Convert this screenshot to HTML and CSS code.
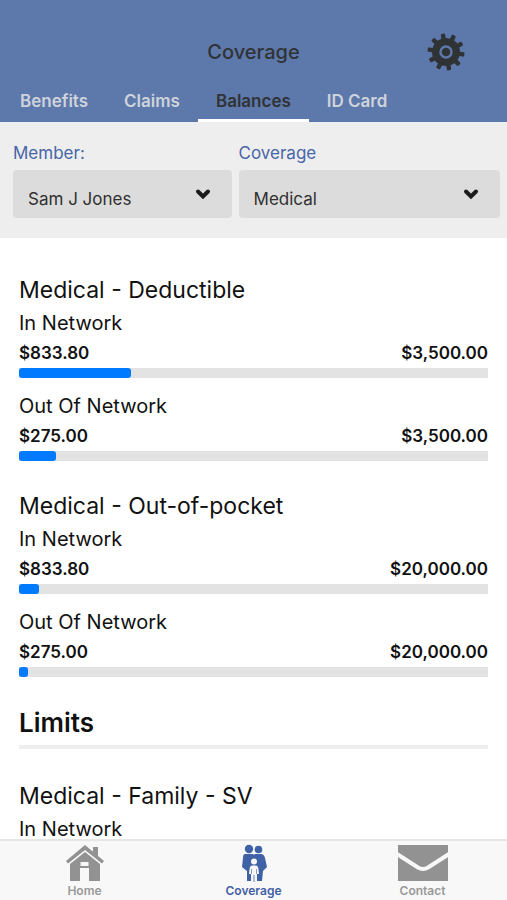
FILE: index.html
```html
<!DOCTYPE html>
<html lang="en">
<head>
<meta charset="utf-8">
<meta name="viewport" content="width=device-width, initial-scale=1">
<title>Coverage</title>
<link rel="stylesheet" href="styles.css">
</head>
<body>
<header class="header">
  <div class="title-bar">
    <h1 class="title">Coverage</h1>
    <button class="settings" type="button" aria-label="Settings">
      <svg viewBox="-20 -20 40 40" width="40" height="40" aria-hidden="true">
        <g transform="rotate(-10)" fill="#303336">
          <circle r="14"/>
          <rect x="-2.200" y="-18.500" width="4.400" height="37" rx="1"/>
          <rect x="-2.200" y="-18.500" width="4.400" height="37" rx="1" transform="rotate(36)"/>
          <rect x="-2.200" y="-18.500" width="4.400" height="37" rx="1" transform="rotate(72)"/>
          <rect x="-2.200" y="-18.500" width="4.400" height="37" rx="1" transform="rotate(108)"/>
          <rect x="-2.200" y="-18.500" width="4.400" height="37" rx="1" transform="rotate(144)"/>
        </g>
        <circle r="5.500" fill="#303336" stroke="#5d78aa" stroke-width="2.400"/>
      </svg>
    </button>
  </div>
  <nav class="tabs" aria-label="Coverage sections">
    <a class="tab" href="#benefits">Benefits</a>
    <a class="tab" href="#claims">Claims</a>
    <a class="tab tab-active" href="#balances" aria-current="page">Balances</a>
    <a class="tab" href="#id-card">ID Card</a>
  </nav>
</header>

<form class="filters">
  <div class="field field-member">
    <label for="member">Member:</label>
    <div class="select-box">
      <select id="member"><option>Sam J Jones</option></select>
      <svg class="chevron" viewBox="0 0 16 12" width="16" height="12" aria-hidden="true"><path d="M3 3.500 8 8.500 13 3.500"/></svg>
    </div>
  </div>
  <div class="field field-coverage">
    <label for="coverage">Coverage</label>
    <div class="select-box">
      <select id="coverage"><option>Medical</option></select>
      <svg class="chevron" viewBox="0 0 16 12" width="16" height="12" aria-hidden="true"><path d="M3 3.500 8 8.500 13 3.500"/></svg>
    </div>
  </div>
</form>

<main class="content">
  <section class="plan">
    <h2 class="plan-title">Medical - Deductible</h2>
    <div class="balance">
      <h3 class="network">In Network</h3>
      <div class="amounts"><span>$833.80</span><span>$3,500.00</span></div>
      <div class="bar"><div class="fill" style="width:23.8%"></div></div>
    </div>
    <div class="balance">
      <h3 class="network">Out Of Network</h3>
      <div class="amounts"><span>$275.00</span><span>$3,500.00</span></div>
      <div class="bar"><div class="fill" style="width:7.9%"></div></div>
    </div>
  </section>
  <section class="plan">
    <h2 class="plan-title">Medical - Out-of-pocket</h2>
    <div class="balance">
      <h3 class="network">In Network</h3>
      <div class="amounts"><span>$833.80</span><span>$20,000.00</span></div>
      <div class="bar"><div class="fill" style="width:4.2%"></div></div>
    </div>
    <div class="balance">
      <h3 class="network">Out Of Network</h3>
      <div class="amounts"><span>$275.00</span><span>$20,000.00</span></div>
      <div class="bar"><div class="fill" style="width:2%"></div></div>
    </div>
  </section>
  <h2 class="limits">Limits</h2>
  <section class="plan">
    <h2 class="plan-title">Medical - Family - SV</h2>
    <div class="balance">
      <h3 class="network">In Network</h3>
    </div>
  </section>
</main>

<nav class="bottom-nav" aria-label="Main">
  <a class="nav-item" href="#home">
    <svg viewBox="0 0 40 38" width="40" height="38" aria-hidden="true" fill="#929292">
      <path d="M28 3h5v11l-5-5z"/>
      <path d="M20 1 1 17l2 2.500L20 6l17 13.500L39 17z"/>
      <path fill-rule="evenodd" d="M20 8 5 20v17h10V24h9v13h11V20zM15.500 18h8v4h-8z"/>
    </svg>
    <span>Home</span>
  </a>
  <a class="nav-item nav-active" href="#coverage-home" aria-current="page">
    <svg viewBox="0 0 30 38" width="30" height="38" aria-hidden="true" fill="#3f61a5">
      <circle cx="10" cy="5" r="4.200"/>
      <circle cx="19.500" cy="5.500" r="3.800"/>
      <path d="M6 10h8l1 1 1-1h6q3 0 4 4l2 9-4 4-1 10H8V27l-5-4 1-9q0-4 2-4z"/>
      <g fill="#f8f8f8">
        <circle cx="15" cy="17.500" r="3"/>
        <path d="M13 21.500h4q2 0 2.300 2.500l.7 6h-2v8h-6v-8h-2l.7-6q.3-2.500 2.300-2.500z"/>
      </g>
      <path d="M14.600 31h.8v7h-.8zM12.200 25h.6v5h-.6zM17.200 25h.6v5h-.6z"/>
    </svg>
    <span>Coverage</span>
  </a>
  <a class="nav-item" href="#contact">
    <svg viewBox="0 0 52 38" width="52" height="38" aria-hidden="true">
      <path fill="#929292" d="M1 1h50v36H1z"/>
      <path d="M0 10 21 23.500q5 3 10 0L52 10" fill="none" stroke="#f8f8f8" stroke-width="4"/>
    </svg>
    <span>Contact</span>
  </a>
</nav>
</body>
</html>
```
FILE: styles.css
```css
* {
  box-sizing: border-box;
}

body {
  margin: 0;
  height: 100vh;
  display: flex;
  flex-direction: column;
  background: #fff;
  color: #111;
  font-family: Inter, "Liberation Sans", sans-serif;
}

h1, h2, h3 {
  margin: 0;
  font-weight: 400;
}

a {
  color: inherit;
  text-decoration: none;
}

.header {
  flex: none;
  padding-top: 24px;
  background: #5d78aa;
}

.title-bar {
  display: grid;
  grid-template-columns: 1fr auto 1fr;
  align-items: center;
  height: 56px;
  padding: 0 41px;
}

.title {
  grid-column: 2;
  color: #303336;
  font-size: 20px;
  font-weight: 500;
}

.settings {
  justify-self: end;
  display: block;
  padding: 0;
  border: 0;
  background: none;
}

.settings svg {
  display: block;
}

.tabs {
  display: flex;
  height: 42px;
  padding-left: 2px;
}

.tab {
  padding: 0 18px;
  border-bottom: 3px solid transparent;
  color: #ced3dc;
  font-size: 17px;
  font-weight: 600;
  line-height: 42px;
}

.tab-active {
  border-color: #fff;
  color: #303336;
}

.filters {
  flex: none;
  display: flex;
  gap: 7px;
  padding: 18px 7px 20px 13px;
  background: #eee;
}

.field-member {
  flex: 219;
}

.field-coverage {
  flex: 262;
}

.field label {
  display: block;
  height: 30px;
  color: #4766a8;
  font-size: 17px;
  line-height: 26px;
}

.select-box {
  position: relative;
}

.select-box select {
  appearance: none;
  display: block;
  width: 100%;
  height: 48px;
  padding: 10px 40px 0 15px;
  border: 0;
  border-radius: 4px;
  background: #dcdcdc;
  color: #303030;
  font-family: inherit;
  font-size: 17px;
}

.chevron {
  position: absolute;
  top: 18px;
  right: 21px;
  fill: none;
  stroke: #1c1c1c;
  stroke-width: 4;
  stroke-linecap: round;
  pointer-events: none;
}

.content {
  flex: 1;
  min-height: 0;
  overflow-y: auto;
  scrollbar-width: none;
  padding: 34px 19px 0;
}

.plan {
  margin-bottom: 27px;
}

.plan-title {
  font-size: 23px;
  line-height: 36px;
}

.balance + .balance {
  margin-top: 13px;
}

.network {
  font-size: 20px;
  line-height: 30px;
}

.amounts {
  display: flex;
  justify-content: space-between;
  font-size: 17px;
  font-weight: 600;
  line-height: 30px;
}

.bar {
  height: 10px;
  background: #e3e3e3;
}

.fill {
  height: 100%;
  border-radius: 3px;
  background: #007aff;
}

.limits {
  margin-bottom: 29px;
  padding-bottom: 3px;
  border-bottom: 4px solid #eee;
  font-size: 26px;
  font-weight: 600;
  line-height: 38px;
}

.bottom-nav {
  flex: none;
  display: flex;
  height: 61px;
  padding-top: 3px;
  border-top: 2px solid #e6e6e6;
  background: #f8f8f8;
}

.nav-item {
  flex: 1;
  display: flex;
  flex-direction: column;
  align-items: center;
  color: #999;
  font-size: 12px;
  font-weight: 600;
  line-height: 18px;
}

.nav-active {
  color: #3f61a5;
}
```
